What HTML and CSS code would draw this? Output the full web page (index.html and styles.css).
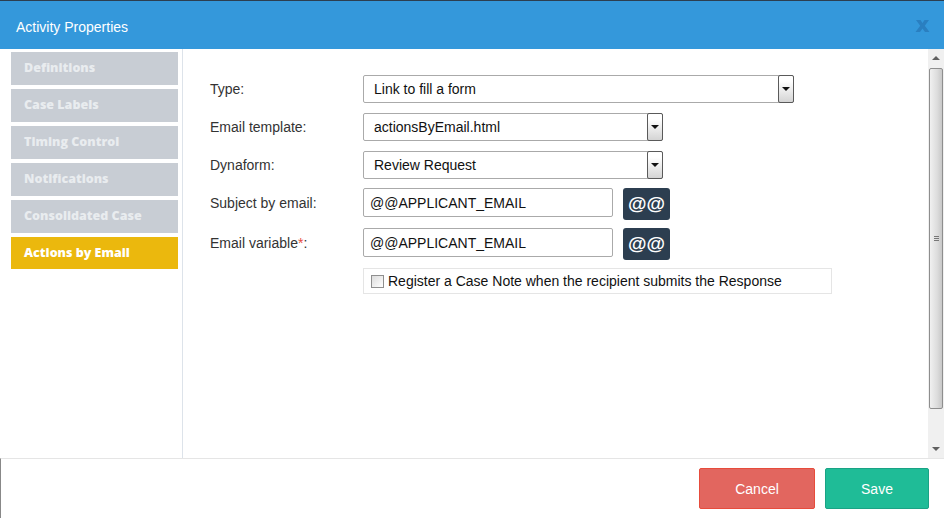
FILE: index.html
```html
<!DOCTYPE html>
<html lang="en">
<head>
    <meta charset="UTF-8">
    <title>Activity Properties</title>
    <link rel="stylesheet" href="styles.css">
</head>
<body>
    <div class="modal">
        <div class="modal-header">
            <span class="modal-title">Activity Properties</span>
            <svg class="close-icon" width="15" height="12" viewBox="0 0 15 12">
                <path d="M1 0h4.5l2 3 2-3H14l-4.2 5.8L14.5 12H10l-2.5-3.5L5 12H0.5l4.7-6.2z" fill="#2a7fc0"/>
            </svg>
        </div>

        <div class="modal-body">
            <div class="sidebar">
                <div class="tab">Definitions</div>
                <div class="tab">Case Labels</div>
                <div class="tab">Timing Control</div>
                <div class="tab">Notifications</div>
                <div class="tab">Consolidated Case</div>
                <div class="tab active">Actions by Email</div>
            </div>

            <div class="content">
                <div class="form-row">
                    <label class="form-label">Type:</label>
                    <div class="select wide">
                        <span>Link to fill a form</span>
                        <span class="select-arrow"></span>
                    </div>
                </div>
                <div class="form-row">
                    <label class="form-label">Email template:</label>
                    <div class="select">
                        <span>actionsByEmail.html</span>
                        <span class="select-arrow"></span>
                    </div>
                </div>
                <div class="form-row">
                    <label class="form-label">Dynaform:</label>
                    <div class="select">
                        <span>Review Request</span>
                        <span class="select-arrow"></span>
                    </div>
                </div>
                <div class="form-row var-row">
                    <label class="form-label">Subject by email:</label>
                    <input class="text-input" type="text" value="@@APPLICANT_EMAIL">
                    <button class="var-btn">@@</button>
                </div>
                <div class="form-row var-row">
                    <label class="form-label">Email variable<span class="req">*</span>:</label>
                    <input class="text-input" type="text" value="@@APPLICANT_EMAIL">
                    <button class="var-btn">@@</button>
                </div>
                <div class="form-row check-row">
                    <div class="form-label"></div>
                    <div class="check-box">
                        <span class="checkbox"></span>
                        <span>Register a Case Note when the recipient submits the Response</span>
                    </div>
                </div>
            </div>

            <div class="scrollbar">
                <div class="scroll-btn"><span class="arrow-up"></span></div>
                <div class="scroll-track">
                    <div class="scroll-thumb"><span class="grip"></span></div>
                </div>
                <div class="scroll-btn"><span class="arrow-down"></span></div>
            </div>
        </div>

        <div class="modal-footer">
            <button class="btn btn-cancel">Cancel</button>
            <button class="btn btn-save">Save</button>
        </div>
    </div>
</body>
</html>
```

FILE: styles.css
```css
body {
    margin: 0;
    padding: 0;
    font-family: "Liberation Sans", Arial, sans-serif;
    background-color: #fff;
}
.modal {
    width: 944px;
    height: 518px;
    display: flex;
    flex-direction: column;
}
.modal-header {
    border-top: 1px solid #2c3e50;
    background-color: #3498db;
    display: flex;
    align-items: center;
    justify-content: space-between;
    padding: 0 14px 0 16px;
    box-sizing: border-box;
    height: 49px;
}
.modal-title {
    color: #fff;
    font-size: 14px;
    margin-top: 3px;
}
.close-icon {
    margin-top: 2px;
}
.modal-body {
    flex: 1;
    display: flex;
    height: 409px;
}
.sidebar {
    width: 183px;
    border-right: 1px solid #dde3ea;
    padding: 3px 4px 0 11px;
    box-sizing: border-box;
    flex-shrink: 0;
}
.tab {
    height: 33px;
    margin-bottom: 4px;
    background-color: #c8cdd4;
    color: #e9ecef;
    font-family: "Open Sans", sans-serif;
    font-weight: 800;
    font-size: 12.5px;
    line-height: 31px;
    padding-left: 13px;
}
.tab.active {
    background-color: #ebb80d;
    color: #fff;
    height: 32px;
}
.content {
    flex: 1;
    padding: 26px 0 0 27px;
}
.form-row {
    display: flex;
    align-items: center;
    margin-bottom: 10px;
    font-size: 14px;
}
.form-label {
    width: 153px;
    color: #333;
    flex-shrink: 0;
}
.req {
    color: #e74c3c;
}
.select {
    width: 300px;
    height: 28px;
    border: 1px solid #aaa;
    border-radius: 2px;
    box-sizing: border-box;
    display: flex;
    align-items: center;
    justify-content: space-between;
    padding-left: 10px;
    color: #111;
}
.select.wide {
    width: 431px;
}
.select-arrow {
    width: 16px;
    height: 28px;
    box-sizing: border-box;
    border: 1px solid #5a5a5a;
    border-radius: 2px;
    margin-right: -1px;
    background: linear-gradient(#fff 20%, #d4d4d4);
    position: relative;
}
.select-arrow:after {
    content: "";
    position: absolute;
    left: 3px;
    top: 11px;
    border-left: 4px solid transparent;
    border-right: 4px solid transparent;
    border-top: 4px solid #111;
}
.form-row:nth-child(3) {
    margin-bottom: 9px;
}
.var-row {
    margin-bottom: 8px;
}
.var-row .form-label {
    margin-top: -3px;
}
.text-input {
    width: 250px;
    height: 29px;
    box-sizing: border-box;
    border: 1px solid #aaa;
    border-radius: 2px;
    padding: 0 6px;
    font-family: "Liberation Sans", Arial, sans-serif;
    font-size: 14px;
    color: #111;
    align-self: flex-start;
}
.var-btn {
    width: 47px;
    height: 32px;
    margin-left: 10px;
    border: none;
    border-radius: 3px;
    background-color: #2c3e50;
    color: #fff;
    font-family: "Liberation Sans", Arial, sans-serif;
    font-weight: bold;
    font-size: 19px;
    padding: 0;
}
.check-box {
    width: 469px;
    height: 26px;
    box-sizing: border-box;
    border: 1px solid #e5e5e5;
    display: flex;
    align-items: center;
    padding-left: 7px;
    color: #111;
}
.checkbox {
    width: 11px;
    height: 11px;
    border: 1px solid #8f8f8f;
    background: linear-gradient(135deg, #dcdcdc, #fff);
    margin-right: 4px;
}
.scrollbar {
    width: 16px;
    background-color: #f0f0f0;
    display: flex;
    flex-direction: column;
    flex-shrink: 0;
}
.scroll-btn {
    height: 18px;
    display: flex;
    align-items: center;
    justify-content: center;
}
.arrow-up {
    border-left: 4px solid transparent;
    border-right: 4px solid transparent;
    border-bottom: 4px solid #606060;
}
.arrow-down {
    border-left: 4px solid transparent;
    border-right: 4px solid transparent;
    border-top: 4px solid #606060;
}
.scroll-track {
    flex: 1;
    padding-top: 1px;
}
.scroll-thumb {
    height: 339px;
    margin: 0 1px;
    border: 1px solid #8e8e8e;
    border-radius: 2px;
    background: linear-gradient(90deg, #f0f0f0, #dcdcdc 60%, #c8c8c8);
    display: flex;
    align-items: center;
    justify-content: center;
}
.grip {
    width: 5px;
    height: 5px;
    border-top: 1px solid #777;
    border-bottom: 1px solid #777;
    box-sizing: border-box;
    position: relative;
}
.grip:after {
    content: "";
    position: absolute;
    left: 0;
    right: 0;
    top: 1px;
    border-top: 1px solid #777;
}
.modal-footer {
    height: 60px;
    border-top: 1px solid #e5e5e5;
    border-left: 1px solid #888;
    box-sizing: border-box;
    display: flex;
    justify-content: flex-end;
    align-items: center;
    gap: 10px;
    padding-right: 15px;
}
.btn {
    height: 41px;
    border-radius: 2px;
    color: #fff;
    font-family: "Liberation Sans", Arial, sans-serif;
    font-size: 14px;
    cursor: pointer;
}
.btn-cancel {
    width: 116px;
    background-color: #e2665f;
    border: 1px solid #e74c3c;
}
.btn-save {
    width: 104px;
    background-color: #1fbc97;
    border: 1px solid #1aa385;
}
```
